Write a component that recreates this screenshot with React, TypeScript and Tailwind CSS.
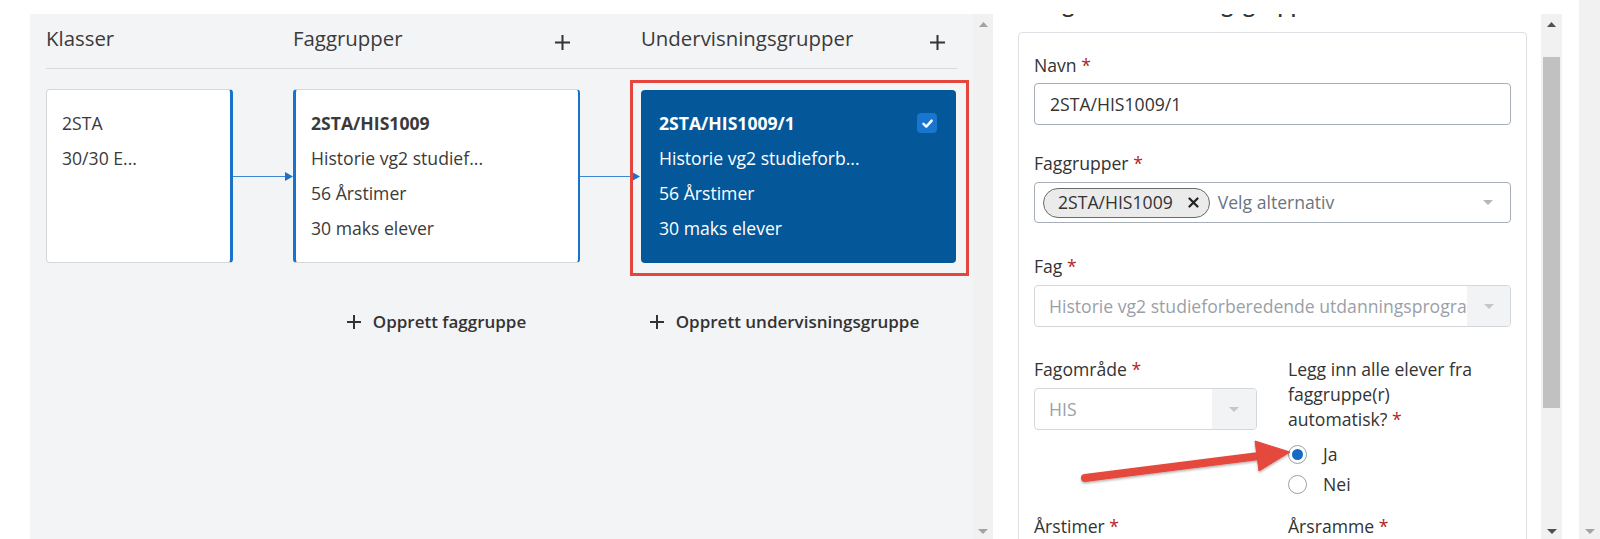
import type { ReactNode } from 'react';

function Caret({ color, className = '' }: { color: string; className?: string }) {
  return (
    <svg width="10" height="5" viewBox="0 0 10 5" className={className}>
      <polygon points="0,0 10,0 5,5" fill={color} />
    </svg>
  );
}

function ArrowUp({ color }: { color: string }) {
  return (
    <svg width="9" height="5" viewBox="0 0 9 5">
      <polygon points="0,5 9,5 4.5,0" fill={color} />
    </svg>
  );
}

function PlusIcon({ size = 15 }: { size?: number }) {
  return (
    <svg width={size} height={size} viewBox={`0 0 ${size} ${size}`} className="shrink-0">
      <path d={`M${size / 2} 0V${size}M0 ${size / 2}H${size}`} stroke="#333" strokeWidth="2" />
    </svg>
  );
}

function ScrollTrack({ width, arrow, thumb }: { width: string; arrow: string; thumb?: boolean }) {
  return (
    <div className={`flex h-full flex-col items-center bg-[#f1f1f1] pb-[5px] pt-[8px] ${width}`}>
      <ArrowUp color={arrow} />
      {thumb && <div className="mt-[30px] h-[351px] w-[17px] bg-[#c1c1c1]" />}
      <div className="flex-1" />
      <Caret color={arrow} />
    </div>
  );
}

function Connector() {
  return (
    <svg width="60" height="174" viewBox="0 0 60 174">
      <line x1="0" y1="87.5" x2="54" y2="87.5" stroke="#3d87d4" strokeWidth="1" />
      <polygon points="52,83 60,87.5 52,92" fill="#1b72c9" />
    </svg>
  );
}

function Line({ children, className = '' }: { children: ReactNode; className?: string }) {
  return <p className={`text-[17.6px] leading-[24px] ${className}`}>{children}</p>;
}

function BoardPanel() {
  return (
    <div className="h-full w-[943px] bg-[#f3f4f6] px-4 pt-[10px]">
      <div className="grid grid-cols-[187px_60px_287px_61px_315px] border-b border-[#d8dadd] pb-[16px]">
        <h3 className="text-[20.4px] leading-[28px] text-[#3a3a3a]">Klasser</h3>
        <div />
        <div className="flex items-start justify-between pr-[10px]">
          <h3 className="text-[20.4px] leading-[28px] text-[#3a3a3a]">Faggrupper</h3>
          <div className="mt-[11px]"><PlusIcon /></div>
        </div>
        <div />
        <div className="flex items-start justify-between pr-[11px]">
          <h3 className="text-[20.4px] leading-[28px] text-[#3a3a3a]">Undervisningsgrupper</h3>
          <div className="mt-[11px]"><PlusIcon /></div>
        </div>
      </div>

      <div className="mt-[20px] grid grid-cols-[187px_60px_287px_61px_315px]">
        <div className="flex h-[174px] flex-col gap-[11px] rounded-[4px] border border-r-[3px] border-[#d5d7da] border-r-[#1b72c9] bg-white pl-[15px] pt-[21px] text-[#3a3a3a]">
          <Line>2STA</Line>
          <Line>30/30 E...</Line>
        </div>
        <Connector />
        <div className="flex h-[174px] flex-col gap-[11px] rounded-[4px] border border-l-[3px] border-r-[2px] border-[#d5d7da] border-l-[#1b72c9] border-r-[#1b72c9] bg-white pl-[15px] pt-[21px] text-[#3a3a3a]">
          <Line className="font-bold">2STA/HIS1009</Line>
          <Line>Historie vg2 studief...</Line>
          <Line>56 Årstimer</Line>
          <Line>30 maks elever</Line>
        </div>
        <Connector />
        <div className="relative mt-[1px]">
          <div className="flex h-[173px] flex-col gap-[11px] rounded-[4px] bg-[#04589a] pl-[18px] pr-[19px] pt-[21px] text-white">
            <div className="flex items-center justify-between">
              <Line className="font-bold">2STA/HIS1009/1</Line>
              <div className="flex h-[20px] w-[20px] items-center justify-center rounded-[4px] bg-[#1876d0]">
                <svg width="13" height="13" viewBox="0 0 13 13">
                  <path d="M2.5 6.8l2.8 2.8 5.4-6" stroke="white" strokeWidth="2.4" fill="none" strokeLinecap="round" strokeLinejoin="round" />
                </svg>
              </div>
            </div>
            <Line className="font-medium">Historie vg2 studieforb...</Line>
            <Line className="font-medium">56 Årstimer</Line>
            <Line className="font-medium">30 maks elever</Line>
          </div>
          <div className="pointer-events-none absolute -bottom-[13px] -left-[11px] -right-[13px] -top-[10px] border-[3px] border-[#e5453c]" />
        </div>
      </div>

      <div className="mt-[47px] grid grid-cols-[187px_60px_287px_61px_315px]">
        <div />
        <div />
        <button className="flex items-center justify-center gap-[12px] text-[17px] font-semibold leading-[24px] text-[#333]">
          <PlusIcon size={14} />
          Opprett faggruppe
        </button>
        <div />
        <div className="w-[287px]">
          <button className="flex w-full items-center justify-center gap-[12px] text-[17px] font-semibold leading-[24px] text-[#333]">
            <PlusIcon size={14} />
            Opprett undervisningsgruppe
          </button>
        </div>
      </div>
    </div>
  );
}

function Label({ children }: { children: ReactNode }) {
  return (
    <label className="block text-[17.6px] leading-[24px] text-[#333]">
      {children} <span className="text-[#b3261e]">*</span>
    </label>
  );
}

function Radio({ checked, label }: { checked?: boolean; label: string }) {
  return (
    <div className="flex h-[30px] items-center gap-4">
      <span className="flex h-[19px] w-[19px] items-center justify-center rounded-full border border-[#9aa1a8] bg-white">
        {checked && <span className="h-[11px] w-[11px] rounded-full bg-[#1569c7]" />}
      </span>
      <span className="text-[17.6px] text-[#333]">{label}</span>
    </div>
  );
}

function FormPanel() {
  return (
    <div className="h-full w-[548px] overflow-hidden bg-white pl-[25px] pr-[14px]">
      <h2 className="-mt-[24px] text-[21px] font-semibold leading-[28px] text-[#333]">Rediger undervisningsgruppe</h2>
      <div className="mt-[14px] rounded-[4px] border border-[#dcdfe3] px-[15px] pb-10 pt-[20px]">
        <Label>Navn</Label>
        <div className="mt-[6px] flex h-[42px] items-center rounded-[4px] border border-[#a7aeb6] px-[15px] text-[17.6px] text-[#333]">
          2STA/HIS1009/1
        </div>

        <div className="mt-[26px]">
          <Label>Faggrupper</Label>
        </div>
        <div className="mt-[7px] flex h-[41px] items-center rounded-[4px] border border-[#a7aeb6] pl-[8px] pr-[17px]">
          <span className="flex h-[30px] items-center gap-[15px] rounded-full border border-[#6a6a6a] bg-[#ebebeb] pl-[14px] pr-[10px] text-[17.6px] text-[#333]">
            2STA/HIS1009
            <svg width="11" height="11" viewBox="0 0 11 11">
              <path d="M1.5 1.5l8 8M9.5 1.5l-8 8" stroke="#222" strokeWidth="2.2" strokeLinecap="round" />
            </svg>
          </span>
          <span className="ml-[8px] flex-1 text-[17.6px] text-[#6b7480]">Velg alternativ</span>
          <Caret color="#b4b8bd" />
        </div>

        <div className="mt-[31px]">
          <Label>Fag</Label>
        </div>
        <div className="mt-[7px] flex h-[42px] overflow-hidden rounded-[4px] border border-[#d3d7db]">
          <div className="flex flex-1 items-center overflow-hidden whitespace-nowrap pl-[14px] text-[17.6px] text-[#9aa0a7]">
            Historie vg2 studieforberedende utdanningsprogram
          </div>
          <div className="flex w-[43px] shrink-0 items-center justify-center bg-[#f2f3f4]">
            <Caret color="#c4c8cc" />
          </div>
        </div>

        <div className="mt-[30px] grid grid-cols-2 gap-x-[31px]">
          <div>
            <Label>Fagområde</Label>
            <div className="mt-[7px] flex h-[42px] overflow-hidden rounded-[4px] border border-[#d3d7db]">
              <div className="flex flex-1 items-center pl-[14px] text-[17.6px] text-[#9aa0a7]">HIS</div>
              <div className="flex w-[44px] shrink-0 items-center justify-center bg-[#f2f3f4]">
                <Caret color="#c4c8cc" />
              </div>
            </div>
          </div>
          <div>
            <p className="text-[17.6px] leading-[25px] text-[#333]">
              Legg inn alle elever fra
              <br />
              faggruppe(r)
              <br />
              automatisk? <span className="text-[#b3261e]">*</span>
            </p>
            <div className="mt-[7px]">
              <Radio checked label="Ja" />
              <Radio label="Nei" />
            </div>
          </div>
        </div>

        <div className="mt-[15px] grid grid-cols-2 gap-x-[31px]">
          <Label>Årstimer</Label>
          <Label>Årsramme</Label>
        </div>
      </div>
    </div>
  );
}

function RedArrow() {
  return (
    <svg className="pointer-events-none absolute left-0 top-0" width="1600" height="539" viewBox="0 0 1600 539">
      <defs>
        <filter id="arrowShadow" x="-10%" y="-50%" width="120%" height="200%">
          <feDropShadow dx="0" dy="1.5" stdDeviation="1.2" floodColor="#000" floodOpacity="0.3" />
        </filter>
      </defs>
      <g filter="url(#arrowShadow)" fill="#e5483e" stroke="#e5483e">
        <line x1="1085" y1="478" x2="1259" y2="456" strokeWidth="8" strokeLinecap="round" />
        <polygon points="1255,441 1290,452 1259,471" strokeWidth="1" strokeLinejoin="round" />
      </g>
    </svg>
  );
}

export default function App() {
  return (
    <div className="relative flex h-[539px] w-[1600px] overflow-hidden bg-white font-['Open_Sans',sans-serif]">
      <div className="flex h-full flex-1 pl-[30px] pt-[14px]">
        <BoardPanel />
        <ScrollTrack width="w-[20px]" arrow="#a3a3a3" />
        <FormPanel />
        <ScrollTrack width="w-[21px]" arrow="#505050" thumb />
      </div>
      <div className="flex h-full w-[21px] flex-col items-center justify-end bg-[#f1f1f1] pb-[5px]">
        <Caret color="#a3a3a3" />
      </div>
      <RedArrow />
    </div>
  );
}
